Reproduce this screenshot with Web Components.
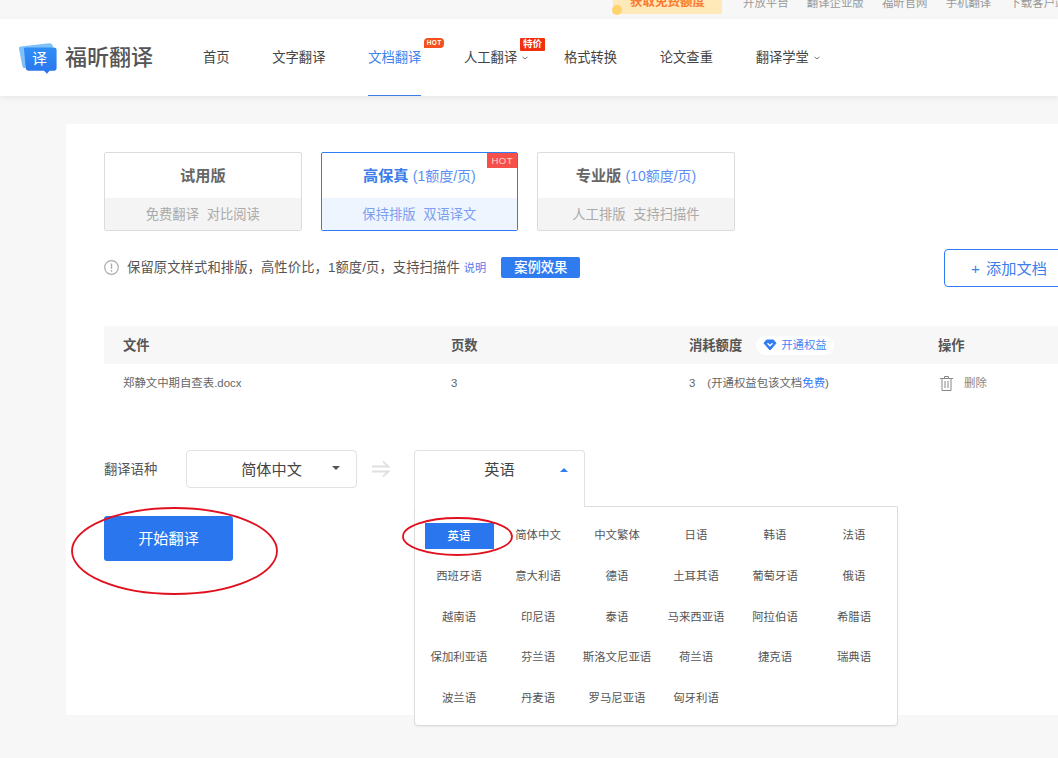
<!DOCTYPE html>
<html lang="zh-CN">
<head>
<meta charset="utf-8">
<title>福昕翻译</title>
<style>
    html, body { margin: 0; padding: 0; height: 758px; overflow: hidden; }
    body {
        position: relative;
        background: #f7f7f7;
        color: #444;
        font: 13.3px/1.4 "Liberation Sans", "Noto Sans CJK SC", sans-serif;
    }
</style>
</head>
<body>
<top-bar></top-bar>
<main-nav></main-nav>
<doc-panel></doc-panel>
<red-ellipse x="71" y="507" w="207" h="88"></red-ellipse>
<red-ellipse x="402" y="517" w="111" h="39"></red-ellipse>

<script>
function defineElement(name, html) {
    const template = document.createElement('template');
    template.innerHTML = html;
    customElements.define(name, class extends HTMLElement {
        constructor() {
            super();
            this.attachShadow({ mode: 'open' });
            this.shadowRoot.appendChild(template.content.cloneNode(true));
        }
    });
}

defineElement('top-bar', `
    <style>
        :host { display: flex; height: 19px; overflow: hidden; font-size: 11.4px; color: #999; padding-left: 613px; }
        .promo {
            position: relative; flex: none;
            width: 109px; height: 14px; line-height: 4px;
            background: #ffe9b8; color: #fa7a32; font-size: 12.5px; font-weight: 700;
            text-align: center; margin-right: 21px;
        }
        .promo::before {
            content: ''; position: absolute; left: -1px; top: 5px;
            width: 10px; height: 10px; border-radius: 50%; background: #ffd36b;
        }
        .links { display: flex; flex: none; gap: 18.2px; white-space: nowrap; line-height: 6px; }
    </style>
    <div class="promo">获取免费额度</div>
    <div class="links">
        <span>开放平台</span><span>翻译企业版</span><span>福昕官网</span><span>手机翻译</span><span>下载客户端</span>
    </div>
`);

defineElement('nav-chevron', `
    <style>
        :host { display: inline-block; width: 6px; height: 4px; margin: 0 -7px 0 5px; vertical-align: 2px; }
        svg { display: block; }
    </style>
    <svg width="6" height="4" viewBox="0 0 6 4"><path d="M.5 1 3 2.8 5.5 1" fill="none" stroke="#777" stroke-width="1"/></svg>
`);

defineElement('nav-item', `
    <style>
        :host { display: flex; align-items: center; position: relative; height: 77px; padding-top: 1px; color: #444; white-space: nowrap; box-sizing: border-box; }
        :host([active]) { color: #3b82f0; border-bottom: 1.5px solid #3b7de9; padding-top: 2.5px; }
    </style>
    <slot></slot>
`);

defineElement('hot-badge', `
    <style>
        :host {
            position: absolute; left: 56px; top: 19px;
            width: 20px; height: 10px;
            background: #f4511e; color: #ffe; border-radius: 4px 4px 4px 0;
            font: 700 6.5px/10px "Liberation Sans", sans-serif; text-align: center; letter-spacing: .3px;
        }
    </style>
    <slot></slot>
`);

defineElement('price-badge', `
    <style>
        :host {
            position: absolute; left: 56px; top: 19px;
            width: 25px; height: 13px;
            background: #f0300f; color: #fff; border-radius: 1px;
            font-size: 9.5px; font-weight: 700; line-height: 12px; text-align: center;
        }
    </style>
    <slot></slot>
`);

defineElement('main-nav', `
    <style>
        :host {
            display: flex; height: 77px; background: #fff; padding-left: 19px;
            box-shadow: 0 2px 6px rgba(0,0,0,.07); position: relative; box-sizing: border-box;
        }
        .logo { display: flex; align-items: center; gap: 8px; width: 184px; }
        .mark { position: relative; width: 38px; height: 32px; }
        .mark svg { display: block; }
        .mark span {
            position: absolute; left: 13px; top: 7px; color: #fff;
            font-size: 15px; line-height: 20px;
        }
        .name { font-size: 22px; line-height: 30px; color: #555; font-weight: 500; }
        .items { display: flex; gap: 42.7px; }
    </style>
    <div class="logo">
        <div class="mark">
            <svg width="38" height="32" viewBox="0 0 38 32">
                <defs><linearGradient id="g" x1="0" y1="0" x2="0" y2="1"><stop offset="0" stop-color="#2f8ef5"/><stop offset="1" stop-color="#2a74ec"/></linearGradient></defs>
                <path d="M1.6 4.4 30 1.2c2-.2 3.4.6 3.7 2.6L35 22 6 26c-1.600.2-2.500-.6-2.700-2L0 6.400c-.2-1.100.5-1.900 1.600-2z" fill="#7fc1f8"/>
                <path d="M6.500 5.500h28.500c1.600 0 2.600 1 2.600 2.600v18c0 1.600-1 2.600-2.600 2.600h-4.500L28 31.800 25 28.700H9.500c-1.500 0-2.500-.9-2.700-2.400L5 7.400c-.2-1.200.4-1.900 1.500-1.900z" fill="url(#g)"/>
            </svg>
            <span>译</span>
        </div>
        <div class="name">福昕翻译</div>
    </div>
    <div class="items">
        <nav-item>首页</nav-item>
        <nav-item>文字翻译</nav-item>
        <nav-item active>文档翻译<hot-badge>HOT</hot-badge></nav-item>
        <nav-item>人工翻译<nav-chevron></nav-chevron><price-badge>特价</price-badge></nav-item>
        <nav-item>格式转换</nav-item>
        <nav-item>论文查重</nav-item>
        <nav-item>翻译学堂<nav-chevron></nav-chevron></nav-item>
    </div>
`);

defineElement('plan-card', `
    <style>
        :host {
            display: flex; flex-direction: column; position: relative;
            width: 197.6px; height: 79px; box-sizing: border-box;
            border: 1px solid #dcdcdc; border-radius: 2px; text-align: center; background: #fff;
        }
        :host([active]) { border-color: #2e7cf6; }
        .head { height: 45px; line-height: 46px; color: #666; font-size: 15.2px; font-weight: 700; white-space: nowrap; }
        :host([active]) .head { color: #3b7de9; }
        .rate { font-size: 14px; font-weight: 400; color: #5b8ef5; }
        .foot { flex: 1; padding-top: 2px; line-height: 30px; background: #f4f4f4; color: #aaa; font-size: 13.3px; word-spacing: 4px; white-space: nowrap; }
        :host([active]) .foot { background: #eef5ff; color: #7d9ff0; }
    </style>
    <div class="head"><slot name="title"></slot> <span class="rate"><slot name="rate"></slot></span></div>
    <div class="foot"><slot name="desc"></slot></div>
    <slot></slot>
`);

defineElement('corner-tag', `
    <style>
        :host {
            position: absolute; right: 0; top: 0;
            width: 30px; height: 15px; background: #f5504a; color: #ffd6d0;
            font: 400 9.5px/15px "Liberation Sans", sans-serif; text-align: center; letter-spacing: .5px;
        }
    </style>
    <slot></slot>
`);

defineElement('info-row', `
    <style>
        :host { display: flex; align-items: center; height: 38px; margin-top: 18px; color: #555; white-space: nowrap; }
        svg { display: block; margin-right: 8px; flex: none; margin-top: -2px; }
        .note { font-size: 11.2px; color: #6076e8; margin-left: 4px; margin-top: 1px; }
        .case {
            margin-left: 15px; width: 79px; height: 21px; line-height: 21px; text-align: center;
            background: #2f7cf0; color: #fff; border-radius: 2px; font-weight: 500; margin-top: -2px;
        }
        .text { letter-spacing: .1px; }
        .add {
            margin-left: auto; width: 130px; height: 38px; line-height: 37px; box-sizing: border-box;
            border: 1px solid #2e7cf6; border-radius: 4px; color: #3b7de9; font-size: 15.2px;
            padding-left: 26px; word-spacing: 2px;
        }
    </style>
    <svg width="15" height="15" viewBox="0 0 15 15">
        <circle cx="7.500" cy="7.500" r="6.800" fill="none" stroke="#aaa" stroke-width="1.200"/>
        <path d="M7.500 3.500v5.200" stroke="#aaa" stroke-width="1.400"/><circle cx="7.500" cy="10.800" r=".9" fill="#aaa"/>
    </svg>
    <span class="text">保留原文样式和排版，高性价比，1额度/页，支持扫描件</span>
    <span class="note">说明</span>
    <span class="case">案例效果</span>
    <span class="add">+ 添加文档</span>
`);

defineElement('file-table', `
    <style>
        :host { display: block; margin-top: 39px; }
        .row {
            display: grid; grid-template-columns: 328px 238px 249px 1fr; padding: 1px 0 0 19px;
            align-items: center; height: 38px; box-sizing: border-box; white-space: nowrap;
        }
        .head { background: #f7f7f7; color: #555; font-weight: 700; padding-top: 2px; }
        .body { font-size: 11.4px; color: #666; }
        .quota { display: flex; align-items: center; }
        .pill {
            display: inline-flex; align-items: center; gap: 4px;
            margin: -1px 0 0 14px; height: 19px; padding: 0 7px; background: #fff; border-radius: 10px;
            color: #4a86f0; font-size: 11.4px; font-weight: 400;
        }
        .blue { color: #2e7cf6; }
        .gap { margin-left: 12px; }
        .del { display: flex; align-items: center; gap: 11px; color: #888; margin-left: 2px; }
        .del svg { margin-top: -1px; }
        svg { display: block; }
    </style>
    <div class="row head">
        <span>文件</span>
        <span>页数</span>
        <span class="quota">消耗额度
            <span class="pill">
                <svg width="14" height="12" viewBox="0 0 14 12"><path d="M3.500 1h7L13 4.200 7 11 1 4.200z" fill="#2e7cf6" stroke="#2e7cf6" stroke-linejoin="round"/><path d="M4.500 4.300 7 6.800l2.500-2.500" fill="none" stroke="#fff" stroke-width="1.300"/></svg>
                开通权益
            </span>
        </span>
        <span>操作</span>
    </div>
    <div class="row body">
        <span>郑静文中期自查表.docx</span>
        <span>3</span>
        <span>3<span class="gap">(开通权益包该文档</span><span class="blue">免费</span>)</span>
        <span class="del">
            <svg width="13" height="15" viewBox="0 0 13 15" fill="none" stroke="#888" stroke-width="1"><path d="M0 2.500h13M4.500 2.500V.5h4v2M2 2.500v12h9v-12M5 5v7M8 5v7"/></svg>
            删除
        </span>
    </div>
`);

defineElement('lang-select', `
    <style>
        :host {
            display: block; position: relative; width: 171px; height: 38px; box-sizing: border-box;
            background: #fff; border: 1px solid #e2e2e2; border-radius: 4px;
            text-align: center; line-height: 37px; font-size: 15.2px; color: #444;
        }
        :host([open]) { height: 57px; border-bottom: 0; border-radius: 4px 4px 0 0; z-index: 2; }
        .caret { position: absolute; right: 16px; top: 15px; width: 0; height: 0; border: 4px solid transparent; border-top-color: #555; border-bottom: 0; }
        :host([open]) .caret { top: 17px; border: 4px solid transparent; border-bottom-color: #2e7cf6; border-top: 0; }
    </style>
    <slot></slot><span class="caret"></span>
`);

defineElement('lang-menu', `
    <style>
        :host {
            display: grid; position: absolute; left: 310px; top: 56px; z-index: 1;
            width: 484px; height: 220px; box-sizing: border-box;
            padding: 9px 0 0 4.500px; grid-template-columns: repeat(6, 79px); grid-auto-rows: 40.700px;
            background: #fff; border: 1px solid #ddd; border-radius: 0 0 4px 4px;
            box-shadow: 0 1px 2px rgba(0,0,0,.06);
        }
    </style>
    <slot></slot>
`);

defineElement('lang-option', `
    <style>
        :host { display: flex; align-items: center; justify-content: center; font-size: 11.4px; color: #555; white-space: nowrap; }
        span { display: block; }
        :host([selected]) span { width: 69px; height: 26px; line-height: 26px; text-align: center; background: #2a76ee; color: #fff; font-weight: 500; }
    </style>
    <span><slot></slot></span>
`);

defineElement('lang-row', `
    <style>
        :host { display: flex; align-items: flex-start; position: relative; margin-top: 48px; }
        .label { width: 82px; line-height: 39px; color: #555; }
        .swap { width: 57px; height: 38px; display: flex; align-items: center; box-sizing: border-box; padding-left: 15px; }
    </style>
    <span class="label">翻译语种</span>
    <lang-select>简体中文</lang-select>
    <span class="swap">
        <svg width="18" height="16" viewBox="0 0 18 16" fill="none" stroke="#e0e0e0" stroke-width="1.800"><path d="M0 5.500h16.500L11 .5M0 10.500h16.500L11 15.500"/></svg>
    </span>
    <lang-select open>英语</lang-select>
    <slot></slot>
`);

defineElement('start-button', `
    <style>
        :host {
            display: block; width: 129px; height: 45px; margin-top: 9px; position: relative;
            background: #2a76ee; color: #fff; border-radius: 3px;
            font-size: 15.200px; line-height: 45px; text-align: center;
        }
    </style>
    <slot></slot>
`);

defineElement('doc-panel', `
    <style>
        :host {
            display: block; box-sizing: border-box; position: relative;
            width: 1046px; height: 591px; margin: 28px 0 0 66px; padding: 28px 38px;
            background: #fff;
        }
        .plans { display: flex; gap: 19px; }
    </style>
    <div class="plans">
        <plan-card><span slot="title">试用版</span><span slot="desc">免费翻译 对比阅读</span></plan-card>
        <plan-card active><span slot="title">高保真</span><span slot="rate">(1额度/页)</span><span slot="desc">保持排版 双语译文</span><corner-tag>HOT</corner-tag></plan-card>
        <plan-card><span slot="title">专业版</span><span slot="rate">(10额度/页)</span><span slot="desc">人工排版 支持扫描件</span></plan-card>
    </div>
    <info-row></info-row>
    <file-table></file-table>
    <lang-row>
        <lang-menu>
            <lang-option selected>英语</lang-option><lang-option>简体中文</lang-option><lang-option>中文繁体</lang-option><lang-option>日语</lang-option><lang-option>韩语</lang-option><lang-option>法语</lang-option>
            <lang-option>西班牙语</lang-option><lang-option>意大利语</lang-option><lang-option>德语</lang-option><lang-option>土耳其语</lang-option><lang-option>葡萄牙语</lang-option><lang-option>俄语</lang-option>
            <lang-option>越南语</lang-option><lang-option>印尼语</lang-option><lang-option>泰语</lang-option><lang-option>马来西亚语</lang-option><lang-option>阿拉伯语</lang-option><lang-option>希腊语</lang-option>
            <lang-option>保加利亚语</lang-option><lang-option>芬兰语</lang-option><lang-option>斯洛文尼亚语</lang-option><lang-option>荷兰语</lang-option><lang-option>捷克语</lang-option><lang-option>瑞典语</lang-option>
            <lang-option>波兰语</lang-option><lang-option>丹麦语</lang-option><lang-option>罗马尼亚语</lang-option><lang-option>匈牙利语</lang-option>
        </lang-menu>
    </lang-row>
    <start-button>开始翻译</start-button>
`);

// hand-drawn annotations over the screenshot, placed by attribute
class RedEllipse extends HTMLElement {
    constructor() {
        super();
        this.attachShadow({ mode: 'open' });
    }

    connectedCallback() {
        const [x, y, w, h] = ['x', 'y', 'w', 'h'].map(a => Number(this.getAttribute(a)));
        this.shadowRoot.innerHTML = `
            <style>
                :host { position: absolute; left: ${x}px; top: ${y}px; z-index: 5; pointer-events: none; }
                svg { display: block; }
            </style>
            <svg width="${w}" height="${h}" viewBox="0 0 ${w} ${h}">
                <ellipse cx="${w / 2}" cy="${h / 2}" rx="${w / 2 - 1}" ry="${h / 2 - 1}" fill="none" stroke="#e0101f" stroke-width="1.800"/>
            </svg>`;
    }
}
customElements.define('red-ellipse', RedEllipse);
</script>
</body>
</html>
